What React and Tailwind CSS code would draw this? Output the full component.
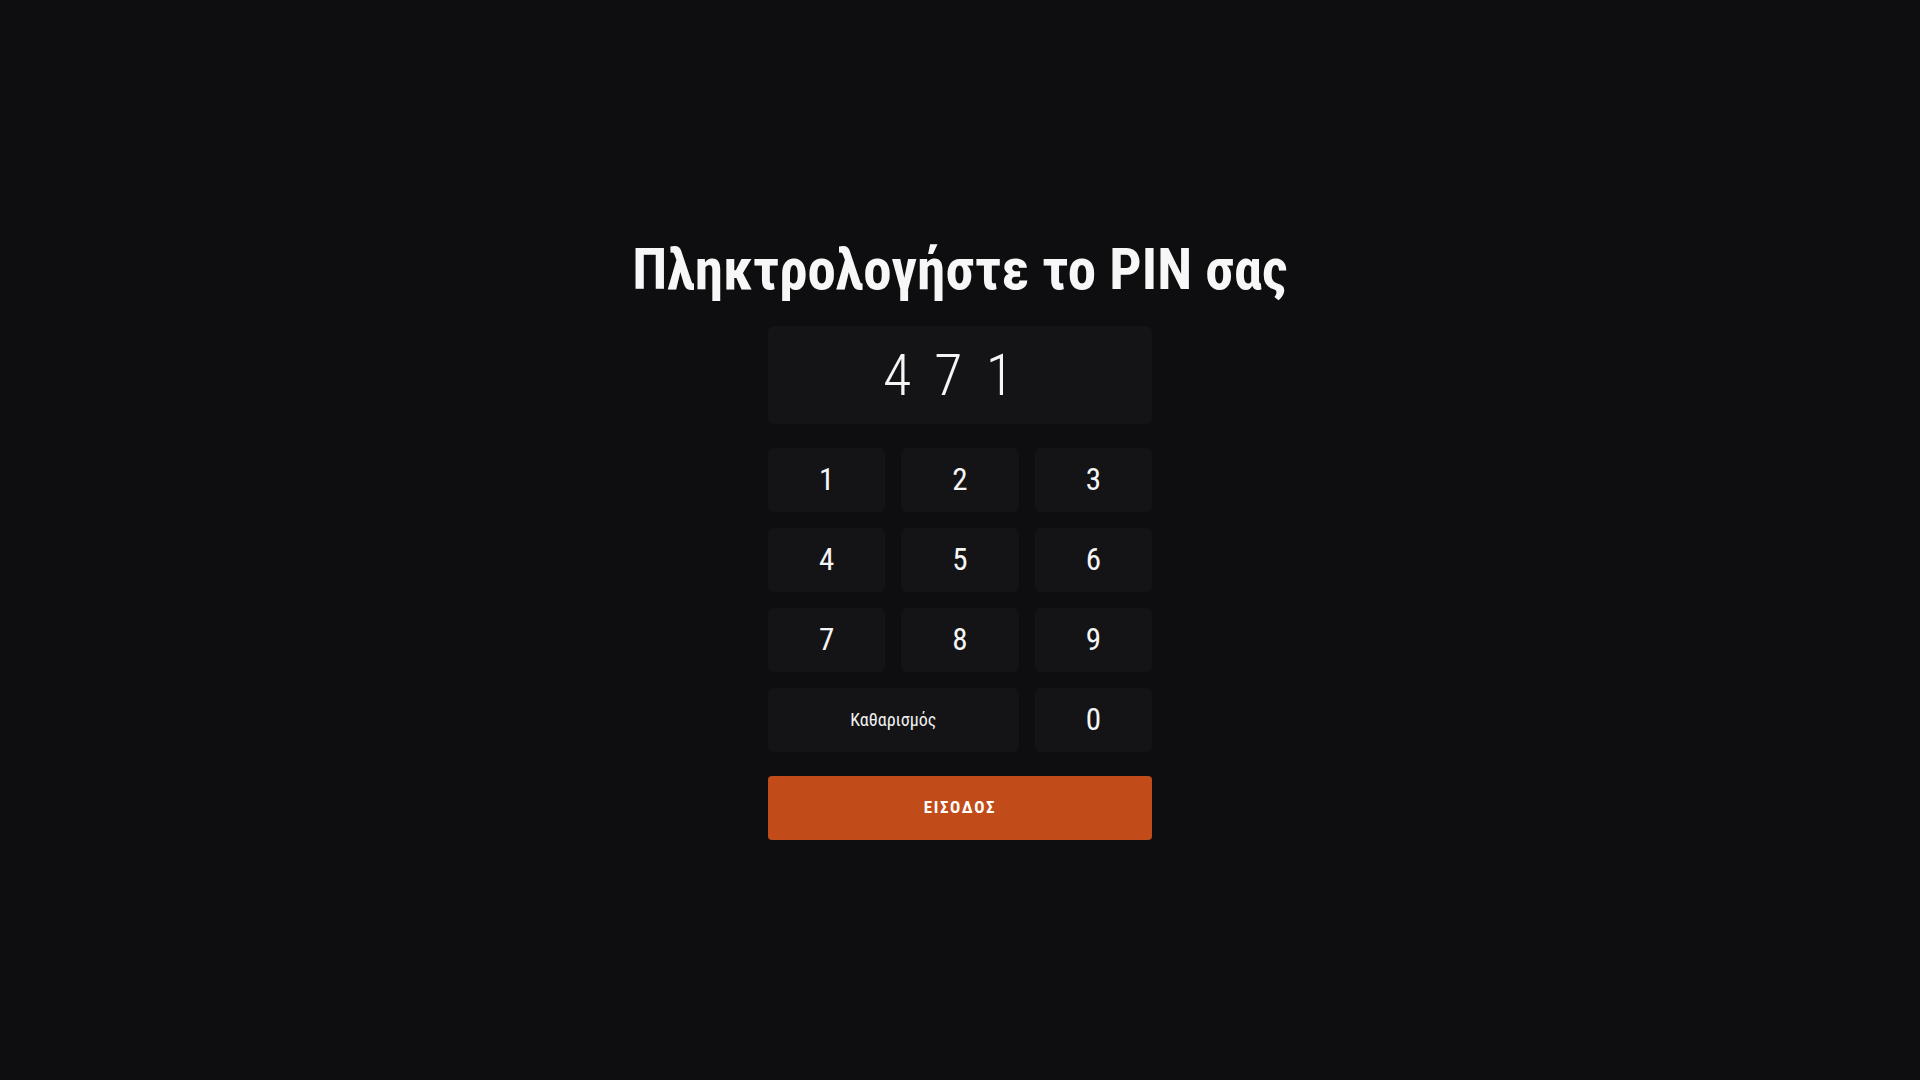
import React, { useState } from "react";

const FONT = { fontFamily: "'Roboto Condensed', 'Roboto', 'Liberation Sans', sans-serif", fontStretch: "condensed" };

export default function App() {
  const [pin, setPin] = useState("471");
  const keys = ["1", "2", "3", "4", "5", "6", "7", "8", "9"];
  return (
    <div
      className="min-h-screen w-full bg-[#0e0e10] flex flex-col items-center justify-center text-white"
      style={FONT}
    >
      <h1 className="text-[57px] h-[58px] leading-[58px] font-bold text-[#f7f7f7] mb-[27px]">
        Πληκτρολογήστε το PIN σας
      </h1>
      <div className="w-[384px] h-[98px] rounded-md bg-[#141416] flex items-center justify-center mb-6">
        <span className="text-[58px] leading-none font-light tracking-[0.4em] text-[#f5f5f5]">
          {pin}
        </span>
      </div>
      <div className="w-[384px] grid grid-cols-3 gap-4 mb-6">
        {keys.map((k) => (
          <button
            key={k}
            onClick={() => setPin((p) => (p + k).slice(0, 6))}
            className="h-16 rounded-md bg-[#141416] flex items-center justify-center text-[31px] leading-none text-[#f5f5f5]"
          >
            {k}
          </button>
        ))}
        <button
          onClick={() => setPin("")}
          className="col-span-2 h-16 rounded-md bg-[#141416] flex items-center justify-center text-[18px] leading-none text-[#f0f0f0]"
        >
          Καθαρισμός
        </button>
        <button
          onClick={() => setPin((p) => (p + "0").slice(0, 6))}
          className="h-16 rounded-md bg-[#141416] flex items-center justify-center text-[31px] leading-none text-[#f5f5f5]"
        >
          0
        </button>
      </div>
      <button className="w-[384px] h-16 rounded-[4px] bg-[#c24b1a] flex items-center justify-center text-[17px] font-bold tracking-[0.1em] text-white">
        ΕΙΣΟΔΟΣ
      </button>
    </div>
  );
}
